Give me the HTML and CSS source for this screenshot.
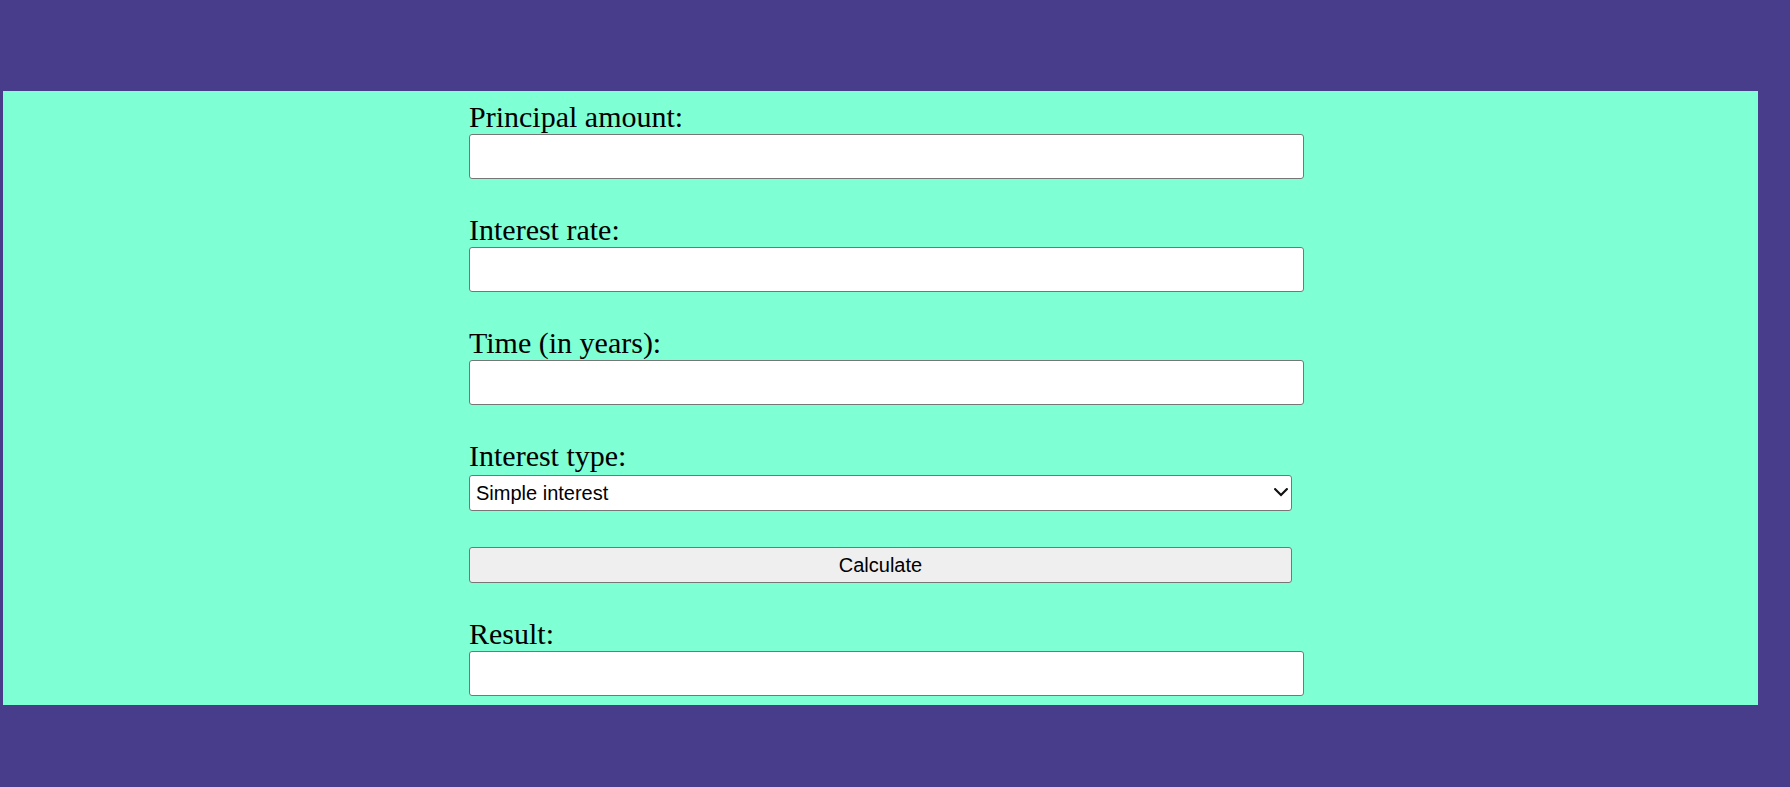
FILE: index.html
```html
<!DOCTYPE html>
<html lang="en">
<head>
<meta charset="utf-8">
<title>Interest Calculator</title>
<link rel="stylesheet" href="styles.css">
</head>
<body>
<main class="panel">
  <form class="calc">
    <label class="field-label" for="principal">Principal amount:</label>
    <input class="text-input" type="text" id="principal">

    <label class="field-label" for="rate">Interest rate:</label>
    <input class="text-input" type="text" id="rate">

    <label class="field-label" for="time">Time (in years):</label>
    <input class="text-input" type="text" id="time">

    <label class="field-label" for="type">Interest type:</label>
    <div class="select-wrap">
      <select class="select-input" id="type">
        <option>Simple interest</option>
        <option>Compound interest</option>
      </select>
      <svg class="chevron" width="14" height="9" viewBox="0 0 14 9" aria-hidden="true">
        <path d="M1.2 1.2 L7 7 L12.8 1.2" fill="none" stroke="#111" stroke-width="2.2" stroke-linecap="square"/>
      </svg>
    </div>

    <button class="calc-button" type="button">Calculate</button>

    <label class="field-label" for="result">Result:</label>
    <input class="text-input last" type="text" id="result">
  </form>
</main>
</body>
</html>
```

FILE: styles.css
```css
html, body {
  margin: 0;
  padding: 0;
}

body {
  background: #483d8b;
  min-height: 787px;
  padding: 91px 32px 0 3px;
  box-sizing: border-box;
  font-family: "Liberation Serif", "Times New Roman", serif;
}

.panel {
  background: #7fffd4;
  padding: 9px 0 9px 466px;
}

.calc {
  display: flex;
  flex-direction: column;
  align-items: flex-start;
  width: 835px;
}

.field-label {
  display: block;
  font-size: 30px;
  line-height: 34px;
  color: #000;
}

.text-input {
  box-sizing: border-box;
  width: 835px;
  height: 45px;
  margin: 0 0 34px 0;
  border: 1px solid #767676;
  border-radius: 3px;
  background: #fff;
  font-size: 20px;
  padding: 1px 2px;
}

.text-input.last {
  margin-bottom: 0;
}

.select-wrap {
  position: relative;
  width: 823px;
  height: 36px;
  margin: 2px 0 36px 0;
}

.select-input {
  -webkit-appearance: none;
  appearance: none;
  box-sizing: border-box;
  width: 823px;
  height: 36px;
  margin: 0;
  border: 1px solid #767676;
  border-radius: 3px;
  background: #fff;
  color: #000;
  font-family: "Liberation Sans", Arial, sans-serif;
  font-size: 20px;
  padding: 0 4px 0 6px;
}

.chevron {
  position: absolute;
  right: 4px;
  top: 13px;
  pointer-events: none;
}

.calc-button {
  box-sizing: border-box;
  width: 823px;
  height: 36px;
  margin: 0 0 34px 0;
  border: 1px solid #767676;
  border-radius: 3px;
  background: #efefef;
  color: #000;
  font-family: "Liberation Sans", Arial, sans-serif;
  font-size: 20px;
  padding: 0;
}
```
